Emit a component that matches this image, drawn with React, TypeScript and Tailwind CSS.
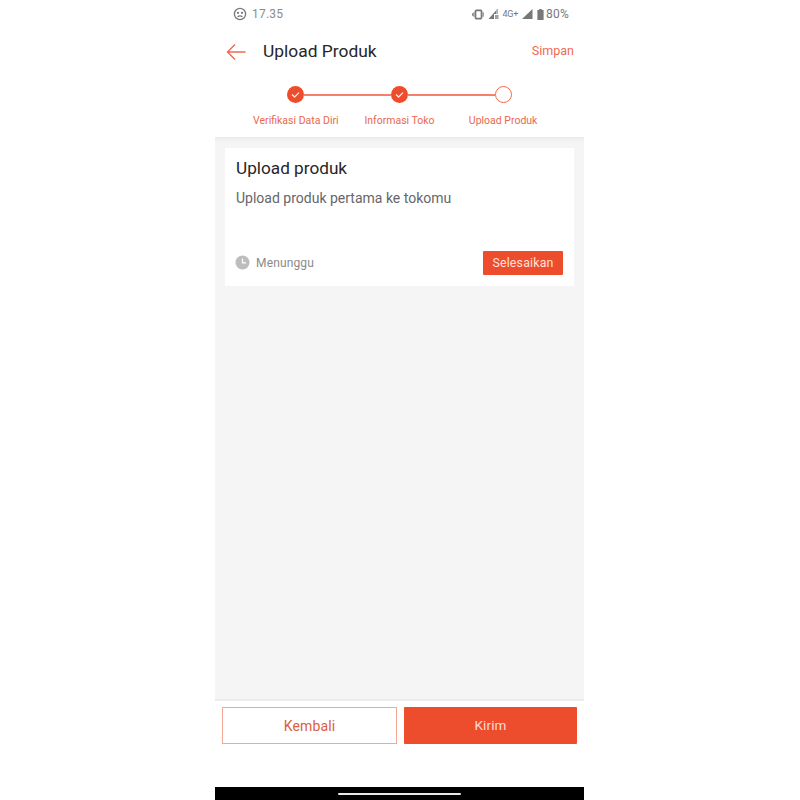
import React from "react";

function Check() {
  return (
    <div className="w-[17px] h-[17px] rounded-full bg-[#ee4d2d] flex items-center justify-center shrink-0">
      <svg width="11" height="11" viewBox="0 0 11 11" fill="none">
        <path d="M2 5.6 L4.6 8 L9 3.6" stroke="#ffe9e2" strokeWidth="1.3" />
      </svg>
    </div>
  );
}

function StatusIcons() {
  return (
    <div className="flex items-center text-[#77787a]">
      <svg width="13" height="11" viewBox="0 0 15 11" fill="currentColor" className="mr-[3px]">
        <rect x="4" y="0.8" width="7" height="9.4" rx="1" fill="none" stroke="currentColor" strokeWidth="2" />
        <rect x="1.5" y="3" width="1.2" height="5" />
        <rect x="0" y="4" width="1" height="3" />
        <rect x="12.3" y="3" width="1.2" height="5" />
      </svg>
      <svg width="12" height="10" viewBox="0 0 11 10" fill="currentColor" className="mr-[2px]">
        <path d="M0 10 L8 1 L8 5 L5.5 5 L5.5 10 Z" />
        <path d="M6.5 6 H10 V10 H6.5 Z" opacity="0.7" />
        <path d="M8 0 L9.5 0 L9.5 5 L8.6 5 Z" opacity="0.6" />
      </svg>
      <span className="text-[9px] leading-none mr-[4px] tracking-[-0.2px]">4G+</span>
      <svg width="11" height="10" viewBox="0 0 11 10" fill="currentColor" className="mr-[4px]">
        <path d="M0 10 L10.5 0 V10 Z" />
      </svg>
      <svg width="7" height="11" viewBox="0 0 7 11" fill="currentColor" className="mr-[2px]">
        <path d="M2.2 0 H4.8 V1 H6.6 V11 H0.4 V1 H2.2 Z" />
      </svg>
      <span className="text-[12px] leading-none tracking-[0.2px]">80%</span>
    </div>
  );
}

export default function App() {
  return (
    <div className="w-[800px] h-[800px] bg-white flex justify-center font-['Roboto',sans-serif]">
      <div className="w-[369px] ml-[-1px] h-full flex flex-col bg-white">
        <div className="h-[28px] shrink-0 flex items-center justify-between pl-[18px] pr-[15px]">
          <div className="flex items-center gap-[5px] text-[#8a8b8d]">
            <svg width="14" height="14" viewBox="0 0 14 14" fill="none" stroke="#77787a" strokeWidth="1.3">
              <circle cx="7" cy="7" r="5.6" />
              <circle cx="5" cy="5.8" r="0.5" fill="#77787a" />
              <circle cx="9" cy="5.8" r="0.5" fill="#77787a" />
              <path d="M4.6 9.8 Q7 7.8 9.4 9.8" />
            </svg>
            <span className="text-[12px] leading-none tracking-[0.2px]">17.35</span>
          </div>
          <StatusIcons />
        </div>

        <div className="h-[47px] shrink-0 flex items-center pl-[11px] pr-[10px]">
          <svg width="20" height="18" viewBox="0 0 20 18" fill="none" stroke="#ee6a50" strokeWidth="1.4" className="shrink-0">
            <path d="M19.5 9 H1.5 M9 1.5 L1.5 9 L9 16.5" />
          </svg>
          <span className="ml-[17px] text-[17.4px] leading-none text-[#26262a]">Upload Produk</span>
          <span className="ml-auto text-[12.5px] leading-none text-[#ee6a50]">Simpan</span>
        </div>

        <div className="h-[62px] shrink-0 flex flex-col">
          <div className="flex items-center mt-[11px] ml-[72px] w-[225px]">
            <Check />
            <div className="flex-1 h-[2px] bg-[#f4806a]" />
            <Check />
            <div className="flex-1 h-[2px] bg-[#f4806a]" />
            <div className="w-[17px] h-[17px] rounded-full border border-[#ee6a50] bg-white shrink-0" />
          </div>
          <div className="grid grid-cols-3 ml-[29px] w-[311px] mt-[13px] text-[10.5px] leading-none text-[#e8684e] text-center">
            <span>Verifikasi Data Diri</span>
            <span>Informasi Toko</span>
            <span>Upload Produk</span>
          </div>
        </div>

        <div className="flex-1 flex flex-col px-[10px] pt-[11px] bg-gradient-to-b from-[#ececec] from-0% to-[#f5f5f5] to-[1%]">
          <div className="h-[138px] bg-white flex flex-col pl-[11px] pr-[11px]">
            <div className="mt-[10px] text-[17.2px] leading-[20px] text-[#26262a]">Upload produk</div>
            <div className="mt-[11px] text-[14px] leading-[18px] text-[#66666a]">Upload produk pertama ke tokomu</div>
            <div className="mt-auto mb-[11px] flex items-center justify-between">
              <div className="flex items-center gap-[6px] ml-[-1px] mb-[2px]">
                <svg width="15" height="15" viewBox="0 0 15 15">
                  <circle cx="7.5" cy="7.5" r="7" fill="#bdbdbd" />
                  <path d="M7.5 3.5 V7.8 H11" fill="none" stroke="#fff" strokeWidth="1.2" />
                </svg>
                <span className="text-[12px] leading-none text-[#8a8a8a] tracking-[0.15px] mt-[1px]">Menunggu</span>
              </div>
              <div className="w-[80px] h-[24px] bg-[#ee4d2d] rounded-[1px] flex items-center justify-center text-[12.3px] leading-none text-[#ffe3db] tracking-[0.2px]">
                Selesaikan
              </div>
            </div>
          </div>
        </div>

        <div className="h-[88px] shrink-0 bg-white border-t-[2px] border-[#ececec] pt-[6px] pl-[7px] pr-[7px] flex gap-[7px]">
          <div className="w-[175px] h-[37px] border border-[#f2a892] flex items-center justify-center text-[14px] leading-none text-[#d9603f] tracking-[0.1px]">
            Kembali
          </div>
          <div className="w-[173px] h-[37px] bg-[#ee4d2d] rounded-[1px] flex items-center justify-center text-[13.5px] leading-none text-[#ffdcd2] tracking-[0.1px]">
            Kirim
          </div>
        </div>

        <div className="h-[13px] shrink-0 bg-black flex items-center justify-center">
          <div className="w-[123px] h-[2px] bg-[#e8e8e8] rounded-full" />
        </div>
      </div>
    </div>
  );
}
